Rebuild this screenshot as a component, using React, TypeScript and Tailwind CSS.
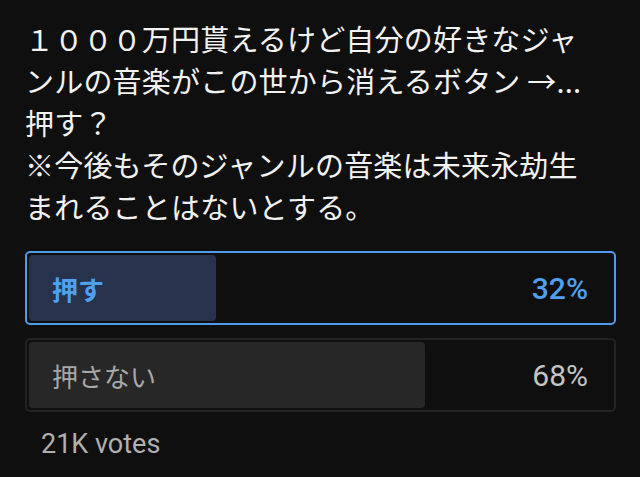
import React from "react";

const jp = { fontFamily: '"Noto Sans CJK JP", "Noto Sans", sans-serif' };
const latin = { fontFamily: 'Roboto, "Noto Sans", sans-serif' };

export default function App() {
  const lines = [
    "１０００万円貰えるけど自分の好きなジャ",
    "ンルの音楽がこの世から消えるボタン →...",
    "押す？",
    "※今後もそのジャンルの音楽は未来永劫生",
    "まれることはないとする。",
  ];
  return (
    <div
      className="w-[640px] h-[477px] bg-[#0f0f0f] overflow-hidden flex flex-col px-[25px] pt-[17px]"
      style={jp}
    >
      <div className="text-[29px] leading-[42px] text-[#f2f2f2] tracking-[0.2px]">
        {lines.map((l, i) => (
          <div key={i} className="whitespace-nowrap">
            {l}
          </div>
        ))}
      </div>
      <div className="mt-[24px] flex flex-col gap-[13px] w-[591px]">
        <div className="relative h-[74px] rounded-[5px] border-2 border-[#4d9bea] p-[2px] flex">
          <div className="h-full w-[32%] rounded-[4px] bg-[#27334d]" />
          <div className="absolute inset-0 flex items-center justify-between pl-[25px] pr-[26px]">
            <span className="text-[26px] font-bold text-[#4ea1f0]">押す</span>
            <span className="text-[30px] font-medium text-[#4ea1f0]" style={latin}>
              32%
            </span>
          </div>
        </div>
        <div className="relative h-[74px] rounded-[5px] border-2 border-[#232323] p-[2px] flex">
          <div className="h-full w-[68%] rounded-[4px] bg-[#272727]" />
          <div className="absolute inset-0 flex items-center justify-between pl-[25px] pr-[26px]">
            <span className="text-[26px] text-[#a8a8a8]">押さない</span>
            <span className="text-[30px] text-[#c4c4c4]" style={latin}>
              68%
            </span>
          </div>
        </div>
      </div>
      <div
        className="mt-[12px] pl-[16px] text-[27px] leading-[40px] text-[#b0b0b0]"
        style={latin}
      >
        21K votes
      </div>
    </div>
  );
}
